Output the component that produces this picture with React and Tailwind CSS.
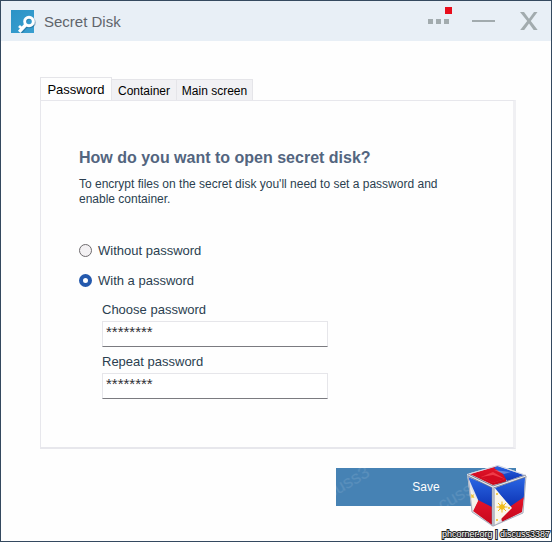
import { useState } from "react";

function DiskIcon() {
  return (
    <svg viewBox="0 0 25 24" className="h-6 w-[25px] shrink-0" aria-hidden="true">
      <defs>
        <linearGradient id="tile" x1="0" y1="0" x2="1" y2="1">
          <stop offset="0" stopColor="#2b93c6" />
          <stop offset="1" stopColor="#3a9fd0" />
        </linearGradient>
      </defs>
      <rect y="1" width="23" height="23" fill="url(#tile)" />
      <g fill="none" stroke="#1c5f8a" strokeOpacity="0.5" transform="translate(.8 1.4)">
        <circle cx="18" cy="12" r="4.4" strokeWidth="3" />
        <path d="M15 15.200L8.500 22.500" strokeWidth="3.200" />
      </g>
      <g fill="none" stroke="#fff" transform="translate(0 .5)">
        <circle cx="18" cy="12" r="4.300" strokeWidth="3" />
        <path d="M15 15L8.200 22.300" strokeWidth="3.400" />
        <path d="M11.500 19.500L8 16.500" strokeWidth="2.800" />
      </g>
    </svg>
  );
}

function TitleBar() {
  return (
    <header className="flex h-10 items-center bg-[#e8eff6] pr-3 pl-[10px]">
      <DiskIcon />
      <h1 className="ml-2 flex-1 pt-[2px] text-[15px] leading-5 text-[#5f656b]">Secret Disk</h1>
      <button type="button" aria-label="Menu" className="relative mr-[23px] flex h-6 items-center gap-[3px]">
        <span className="size-[5px] bg-[#a2abae]" />
        <span className="size-[5px] bg-[#a2abae]" />
        <span className="size-[5px] bg-[#a2abae]" />
        <span className="absolute -top-[2px] -right-[3px] size-[7px] bg-[#e80d1c]" />
      </button>
      <button type="button" aria-label="Minimize" className="mr-6 flex h-6 items-center">
        <span className="h-[2px] w-[23px] bg-[#a2abae]" />
      </button>
      <button type="button" aria-label="Close">
        <svg viewBox="0 0 20 18" className="h-[18px] w-5" aria-hidden="true">
          <path d="M1 0H5L10 6.700L15 0H18.500L11.800 9L18.700 18H14.700L10 11.500L5.200 18H1.200L8.200 9Z" fill="#a2abae" />
        </svg>
      </button>
    </header>
  );
}

function RadioOption({ id, label, checked, onChange }) {
  return (
    <div className="flex h-4 items-center gap-[6px]">
      <input
        type="radio"
        id={id}
        name="mode"
        checked={checked}
        onChange={onChange}
        className="size-[13px] shrink-0 appearance-none rounded-full border border-[#6e6b6e] bg-[#f3f1f3] checked:border-4 checked:border-[#2459ad] checked:bg-white"
      />
      <label htmlFor={id}>{label}</label>
    </div>
  );
}

function PasswordField({ id, label }) {
  return (
    <div className="flex flex-col gap-1">
      <label htmlFor={id}>{label}</label>
      <input
        id={id}
        type="text"
        autoComplete="off"
        defaultValue="********"
        className="h-[26px] w-[226px] border border-[#e6e6ea] border-b-[#7b7b80] bg-white px-[3px] pb-[6px] text-[15px] text-[#303036] outline-none"
      />
    </div>
  );
}

function FlagCube() {
  return (
    <svg viewBox="0 0 62 62" className="size-[62px]" aria-hidden="true">
      <defs>
        <linearGradient id="blueFace" x1="0" y1="0" x2="0" y2="1">
          <stop offset="0" stopColor="#2a66e4" />
          <stop offset="1" stopColor="#0d33b4" />
        </linearGradient>
        <linearGradient id="redFace" x1="0" y1="0" x2="0" y2="1">
          <stop offset="0" stopColor="#e4142a" />
          <stop offset="1" stopColor="#c5081c" />
        </linearGradient>
      </defs>
      <path d="M1 9L32 0L60 10L57 48L27 62L6 47Z" fill="#dfe2ea" />
      <path d="M4 9L31 1L41 8L40 17L27 20Z" fill="url(#redFace)" />
      <path d="M31 1L58 10L41 16L37 9L28 3Z" fill="url(#blueFace)" />
      <path d="M15 12L27 7L39 14L27 18Z" fill="#ef3b48" />
      <path d="M15 12L27 10L39 14L27 18Z" fill="#d30a20" />
      <path d="M2 12L26 22V44L13 37Z" fill="url(#blueFace)" />
      <path d="M12 35L26 42V60L7 46Z" fill="url(#redFace)" />
      <path d="M4 22L12 36L7 46Z" fill="#f5f2ea" />
      <path d="M5 29l1.500 1 1.500-1-.5 2 1 2-2-.5-1 1Z" fill="#edc23a" />
      <path d="M29 23L59 12L58 34L44 42Z" fill="url(#blueFace)" />
      <path d="M45 41L58 32L56 47L36 57L35 52Z" fill="url(#redFace)" />
      <path d="M29 24L46 43L29 60Z" fill="#faf7ec" />
      <circle cx="36" cy="42" r="2.800" fill="#f0bd1c" />
      <path d="M36 36.500V47.500M30.500 42H41.500M32 38L40 46M40 38L32 46" stroke="#f0bd1c" strokeWidth="1" />
      <circle cx="31" cy="29" r="1" fill="#f0bd1c" />
      <circle cx="43" cy="43" r="1" fill="#f0bd1c" />
      <circle cx="31" cy="55" r="1" fill="#f0bd1c" />
      <path d="M2 10L27 22L60 11M27 22V61" fill="none" stroke="#70768a" strokeWidth="2.600" />
      <path d="M2 10L27 22L60 11M27 22V61" fill="none" stroke="#e6e9f1" strokeWidth="1.200" />
      <path d="M2 10L6 47L27 61L57 48L60 11" fill="none" stroke="#a9aebd" strokeWidth="1" />
      <path d="M3 9L32 .500L59 10" fill="none" stroke="#d5d9e6" strokeWidth="1" />
      <path d="M28 5L45 7L38 9Z" fill="#fff" fillOpacity="0.300" />
    </svg>
  );
}

export default function App() {
  const [mode, setMode] = useState("with");

  return (
    <div className="relative flex min-h-screen flex-col border border-[#34495f] bg-[#fefefe] font-['Liberation_Sans',Arial,sans-serif] text-[13px] leading-[15px] text-[#2b3f50]">
      <TitleBar />
      <main className="flex flex-1 flex-col pt-9 pr-[35px] pb-[35px] pl-[39px]">
        <div role="tablist" className="flex items-end text-xs text-black">
          <button
            type="button"
            role="tab"
            aria-selected="true"
            className="-mb-px h-6 w-[72px] border border-b-0 border-[#e5e5e9] bg-[#fefefe] text-center text-[13px]"
          >
            Password
          </button>
          <button
            type="button"
            role="tab"
            aria-selected="false"
            className="h-[21px] w-16 border-t border-[#e5e5e9] bg-[#f1f1f4] pt-px text-center"
          >
            Container
          </button>
          <button
            type="button"
            role="tab"
            aria-selected="false"
            className="h-[21px] w-[77px] border border-b-0 border-[#e5e5e9] bg-[#f1f1f4] pt-px text-center whitespace-nowrap"
          >
            Main screen
          </button>
        </div>
        <section
          role="tabpanel"
          className="flex-1 border border-r-[3px] border-b-2 border-[#e7e7ec] border-r-[#f0f0f3] px-[38px] pt-[47px]"
        >
          <h2 className="text-base leading-5 font-bold text-[#53657f]">How do you want to open secret disk?</h2>
          <p className="mt-[9px] max-w-[380px] text-xs leading-[15px]">
            To encrypt files on the secret disk you'll need to set a password and enable container.
          </p>
          <div className="mt-[35px] flex flex-col gap-[14px]">
            <RadioOption
              id="without"
              label="Without password"
              checked={mode === "without"}
              onChange={() => setMode("without")}
            />
            <RadioOption
              id="with"
              label="With a password"
              checked={mode === "with"}
              onChange={() => setMode("with")}
            />
          </div>
          <div className="mt-[14px] flex flex-col gap-[7px] pl-[23px]">
            <PasswordField id="choose" label="Choose password" />
            <PasswordField id="repeat" label="Repeat password" />
          </div>
        </section>
        <button
          type="button"
          className="relative mt-[19px] h-[38px] w-[180px] self-end overflow-hidden bg-[#4682b4] text-xs text-white"
        >
          <span aria-hidden="true" className="absolute top-0 -left-3 -rotate-30 text-lg text-white/10">
            cuss3
          </span>
          <span aria-hidden="true" className="absolute top-3 left-[100px] -rotate-30 text-lg text-white/10">
            cuss3
          </span>
          Save
        </button>
      </main>
      <div className="absolute right-0 bottom-0 flex flex-col items-end">
        <div className="mr-[23px]">
          <FlagCube />
        </div>
        <p className="pr-px text-[9px] leading-[14px] text-white [-webkit-text-stroke:2px_#222] [paint-order:stroke_fill]">
          phcorner.org | discuss3387
        </p>
      </div>
    </div>
  );
}
